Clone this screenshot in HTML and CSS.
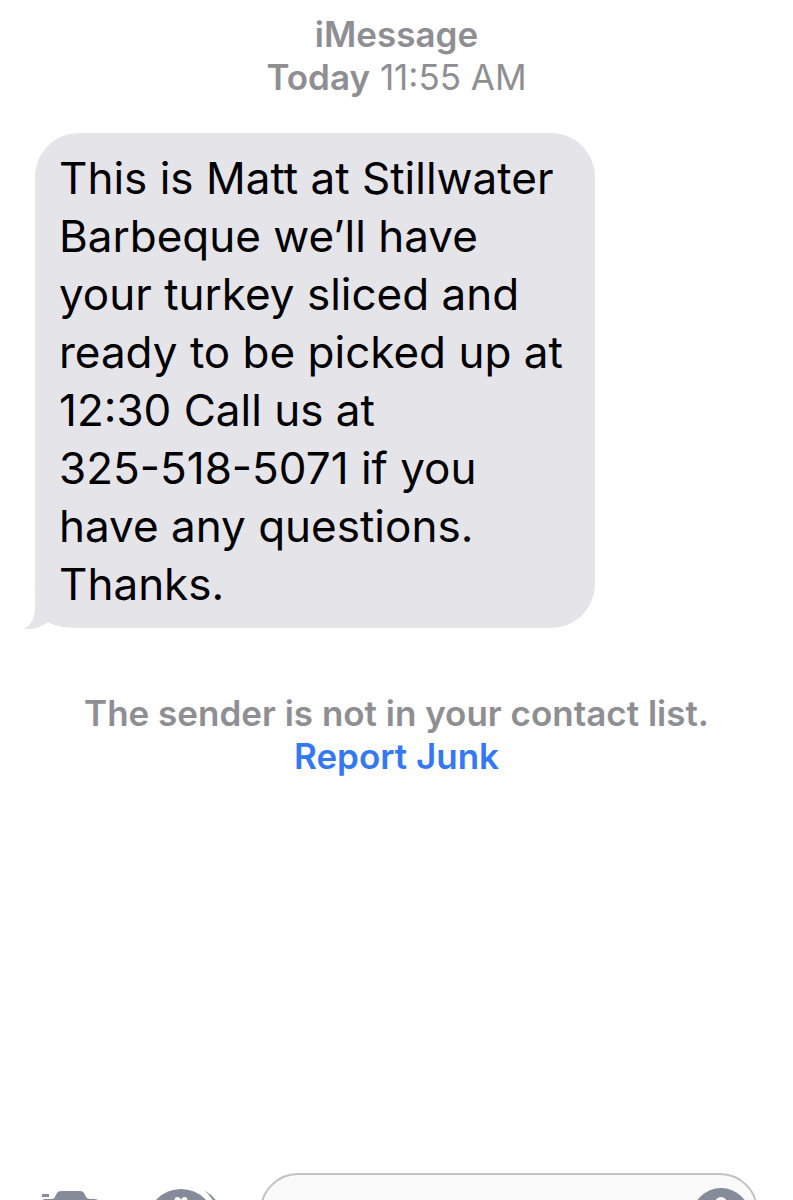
FILE: index.html
```html
<!DOCTYPE html>
<html lang="en">
<head>
  <meta charset="UTF-8">
  <meta name="viewport" content="width=device-width, initial-scale=1.0">
  <title>iMessage</title>
  <link rel="stylesheet" href="styles.css">
</head>
<body>
  <main class="thread">
    <div class="timestamp">
      <b>iMessage</b><br>
      <b>Today</b> 11:55 AM
    </div>

    <div class="message">
      <svg class="tail" viewBox="0 0 60 40" aria-hidden="true">
        <path d="M12 0V18C12 29 8 37 0 40C10 41 19 38 25 33C33 38 43 39 60 39V0Z"/>
      </svg>
      <p>
        This is Matt at Stillwater<br>
        Barbeque we’ll have<br>
        your turkey sliced and<br>
        ready to be picked up at<br>
        12:30 Call us at<br>
        325-518-5071 if you<br>
        have any questions.<br>
        Thanks.
      </p>
    </div>

    <div class="notice">
      The sender is not in your contact list.<br>
      <a href="#">Report Junk</a>
    </div>
  </main>

  <form class="composer">
    <button type="button" class="icon-btn camera" aria-label="Camera">
      <svg width="60" height="54" viewBox="0 0 60 54">
        <path d="M2 3H9V6H2ZM6 8H12Q14 8 15 6L17 2Q18 0 21 0H40Q43 0 44 2L46 6Q47 8 50 8H54Q60 8 60 14V48Q60 54 54 54H6Q0 54 0 48V14Q0 8 6 8Z"/>
      </svg>
    </button>
    <button type="button" class="icon-btn touch" aria-label="Digital Touch">
      <svg width="72" height="72" viewBox="0 0 72 72">
        <ellipse cx="33" cy="34" rx="34" ry="34"/>
        <path d="M56 1Q75 12 75 34Q75 54 60 64Q71 50 71 34Q71 14 56 1Z"/>
        <path class="cut" d="M33 30L27 19Q25 8 29 8Q32 8 33 11Q34 8 37 8Q41 8 39 19Z"/>
      </svg>
    </button>
    <div class="field">
      <input type="text" aria-label="Message">
      <button type="button" class="icon-btn mic" aria-label="Dictate">
        <svg width="58" height="58" viewBox="0 0 58 58">
          <circle cx="29" cy="29" r="29"/>
          <rect class="cut" x="23" y="9" width="12" height="25" rx="6"/>
          <path class="line" d="M18 27V30Q18 40 29 40Q40 40 40 30V27M29 40V48"/>
        </svg>
      </button>
    </div>
  </form>
</body>
</html>
```

FILE: styles.css
```css
* {
  margin: 0;
  padding: 0;
  box-sizing: border-box;
}
body {
  font-family: Inter, "Liberation Sans", sans-serif;
  background: #fff;
  color: #000;
  display: flex;
  flex-direction: column;
  height: 100vh;
  overflow: hidden;
}
.thread {
  flex: 1;
  min-height: 0;
  padding: 13px 35px 0;
}
.timestamp,
.notice {
  font-size: 35px;
  line-height: 43px;
  color: #8e8e93;
  text-align: center;
}
.timestamp b,
.notice {
  font-weight: 600;
}
.message {
  position: relative;
  z-index: 0;
  width: fit-content;
  min-width: 560px;
  margin: 34px 0 64px;
  padding: 16px 24px 15px;
  background: #e5e4e9;
  border-radius: 44px;
  font-size: 44px;
  line-height: 58px;
  white-space: nowrap;
}
.tail {
  position: absolute;
  z-index: -1;
  left: -12px;
  bottom: -1px;
  width: 60px;
  height: 40px;
  fill: #e5e4e9;
}
.notice a {
  color: #3478f6;
  text-decoration: none;
}

/* Only the top edge of the bar shows, the rest runs off screen */
.composer {
  display: flex;
  align-items: flex-start;
  height: 27px;
  padding: 0 35px 0 40px;
  overflow: hidden;
}
.icon-btn {
  flex: none;
  border: none;
  background: none;
  cursor: pointer;
}
.icon-btn svg {
  display: block;
  fill: #858b99;
  overflow: visible;
}
.icon-btn .cut {
  fill: #fff;
}
.icon-btn .line {
  fill: none;
  stroke: #fff;
  stroke-width: 3;
}
.camera {
  padding-top: 18px;
}
.touch {
  margin: 0 40px 0 48px;
  padding-top: 16px;
}
.field {
  flex: 1;
  min-width: 0;
  display: flex;
  align-items: flex-start;
  height: 76px;
  padding: 13px 6px 0 24px;
  background: #fafafa;
  border: 2px solid #c2c2c4;
  border-radius: 38px;
}
.field input {
  flex: 1;
  min-width: 0;
  height: 46px;
  border: none;
  outline: none;
  background: none;
  font: inherit;
  font-size: 35px;
}
```
